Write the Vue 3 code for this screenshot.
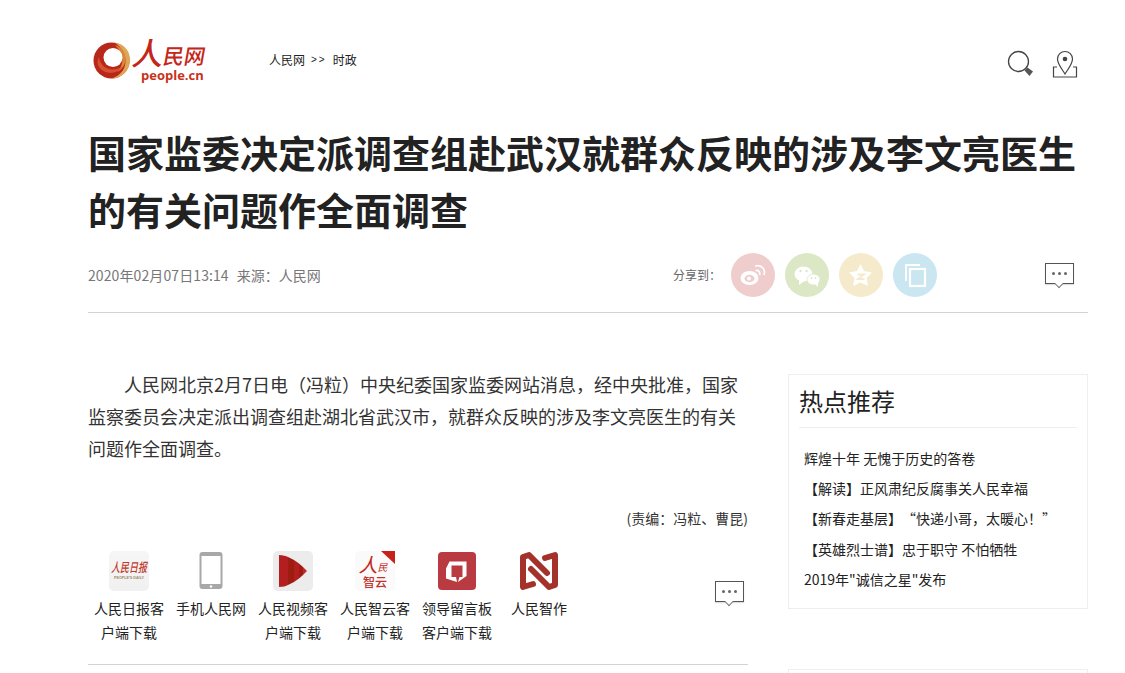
<template>
  <div class="page">
    <header class="top">
      <div class="logo">
        <svg class="logo-mark" viewBox="0 0 38 37" width="38" height="37">
          <circle cx="18.500" cy="18.500" r="18" fill="#b8281a" />
          <path d="M22 0.800 C32 2 37.500 10 37 19 C36.500 29 28 36.500 19 36.500 C28 33 32.500 27 32.500 19 C32.500 11 28 5 22 0.800Z" fill="#e0a655" />
          <path d="M22 3 C29 5 33 11 32.500 18 C32 24 28 28 24 30 C28 26 30 21 29 16 C28 10 25 6 22 3Z" fill="#d9853a" />
          <circle cx="20" cy="15.500" r="9.500" fill="#fff" />
          <path d="M6 15 C7 25 17 31 29 25 C24 33 9 33 5 23 C4 20 5 17 6 15Z" fill="#d8502e" />
        </svg>
        <div class="logo-words">
          <div class="logo-cn"><span class="cn-big">人</span><span>民网</span></div>
          <div class="logo-en">people.cn</div>
        </div>
      </div>
      <div class="crumb">
        <span>人民网</span>
        <span class="arrows">&gt;&gt;</span>
        <span>时政</span>
      </div>
      <div class="tools">
        <svg viewBox="0 0 28 28" width="28" height="28">
          <circle cx="11.500" cy="11.500" r="10" fill="none" stroke="#444" stroke-width="1.300" />
          <path d="M20.500 17.500 L26 21.500 L22.500 26 L17.500 20.500Z" fill="#555" />
        </svg>
        <svg viewBox="0 0 26 28" width="26" height="28">
          <path d="M13 24 C10 19 5.500 14 5.500 9 A7.500 7.500 0 0 1 20.500 9 C20.500 14 16 19 13 24Z" fill="none" stroke="#444" stroke-width="1.200" />
          <circle cx="13" cy="9" r="2.300" fill="#444" />
          <path d="M5 17 H1.500 V27 H24.500 V17 H21" fill="none" stroke="#444" stroke-width="1.200" />
        </svg>
      </div>
    </header>

    <h1 class="title">国家监委决定派调查组赴武汉就群众反映的涉及李文亮医生的有关问题作全面调查</h1>

    <div class="meta">
      <div class="meta-text"><span class="date">2020年02月07日13:14</span>来源：人民网</div>
      <div class="share">
        <span class="share-label">分享到：</span>
        <span v-for="s in shares" :key="s.name" class="share-btn" :style="{ background: s.color }">
          <svg v-if="s.name === 'weibo'" viewBox="0 0 44 44" width="44" height="44">
            <ellipse cx="18.500" cy="25" rx="9" ry="7" fill="#fff" />
            <ellipse cx="18.500" cy="25.500" rx="5" ry="3.700" fill="#f0cdcd" />
            <circle cx="18" cy="25.500" r="2" fill="#fff" />
            <path d="M24 13 C30 11.500 35 15.500 33 22 M24.500 17.500 C27.500 17 29.500 19 28.500 22" fill="none" stroke="#fff" stroke-width="1.700" />
          </svg>
          <svg v-else-if="s.name === 'wechat'" viewBox="0 0 44 44" width="44" height="44">
            <ellipse cx="18.500" cy="21" rx="9" ry="7.500" fill="#fff" />
            <path d="M14 26 L14 32 L20 27.500Z" fill="#fff" />
            <ellipse cx="28.500" cy="26.500" rx="6.500" ry="5.500" fill="#fff" stroke="#dce7c6" stroke-width="0.800" />
            <path d="M30 31 L33 34 L33 29Z" fill="#fff" />
            <circle cx="15.500" cy="18" r="1.200" fill="#dce7c6" />
            <circle cx="21.500" cy="18" r="1.200" fill="#dce7c6" />
            <circle cx="26.500" cy="25" r="0.900" fill="#dce7c6" />
            <circle cx="30.500" cy="25" r="0.900" fill="#dce7c6" />
          </svg>
          <svg v-else-if="s.name === 'qzone'" viewBox="0 0 44 44" width="44" height="44">
            <path d="M21.500 11 L25 18 L33 19.500 L27.500 25 L29 33 L21.500 29.500 L14 33 L15.500 25 L10 19.500 L18 18Z" fill="#fff" />
            <path d="M18.500 21.500 H25 L19 26 H25.500" fill="none" stroke="#f5eacb" stroke-width="1.800" />
          </svg>
          <svg v-else viewBox="0 0 44 44" width="44" height="44">
            <path d="M27 12 H13 V28" fill="none" stroke="#fff" stroke-width="1.800" />
            <rect x="17" y="16" width="15" height="17" fill="none" stroke="#fff" stroke-width="2.200" />
          </svg>
        </span>
      </div>
      <span class="comment comment-top">
        <i></i><i></i><i></i>
      </span>
    </div>

    <div class="columns">
      <main class="article">
        <p class="body-text">人民网北京2月7日电（冯粒）中央纪委国家监委网站消息，经中央批准，国家监察委员会决定派出调查组赴湖北省武汉市，就群众反映的涉及李文亮医生的有关问题作全面调查。</p>
        <div class="editor">(责编：冯粒、曹昆)</div>
        <div class="apps">
          <div v-for="a in apps" :key="a.name" class="app">
            <div class="app-icon">
              <div v-if="a.name === 'daily'" class="tile-daily">
                <span class="daily-cn">人民日报</span>
                <span class="daily-en">PEOPLE'S DAILY</span>
              </div>
              <svg v-else-if="a.name === 'phone'" viewBox="0 0 40 40" width="40" height="40">
                <rect x="8.500" y="1" width="23" height="37" rx="3" fill="#a8a8a8" />
                <rect x="10.500" y="5" width="19" height="28" fill="#fff" />
                <circle cx="20" cy="35.500" r="1.200" fill="#fff" />
              </svg>
              <svg v-else-if="a.name === 'video'" viewBox="0 0 40 40" width="40" height="40">
                <rect width="40" height="40" rx="5" fill="#ececec" />
                <path d="M6 4 C10 4 13 5 15 6 V34 C13 35 10 36 6 36Z" fill="#b31f20" />
                <path d="M15 6 L21 9 V31 L15 34Z" fill="#9e1c10" />
                <path d="M21 9 L26 12.500 V27.500 L21 31Z" fill="#b31f20" />
                <path d="M26 12.500 L30 16 V24 L26 27.500Z" fill="#9e1c10" />
                <path d="M30 16 L34 20 L30 24Z" fill="#c22a2a" />
              </svg>
              <div v-else-if="a.name === 'cloud'" class="tile-cloud">
                <span class="cloud-top"><b>人</b>民</span>
                <span class="cloud-bottom">智云</span>
              </div>
              <svg v-else-if="a.name === 'board'" viewBox="0 0 40 40" width="40" height="40">
                <rect x="1" y="1" width="38" height="38" rx="4" fill="#ba3a41" />
                <path d="M12.500 10.500 H29.500 V25 L21 31 L22.500 26 H25.500 V14.500 H14.500 V26 H19 L20 31 L9 27.500 V17.500Z" fill="#fff" />
              </svg>
              <svg v-else viewBox="0 0 40 40" width="40" height="40">
                <path d="M14 33 L4 36 V6 L10 4 L28 22" fill="none" stroke="#a5322a" stroke-width="6" stroke-linecap="round" stroke-linejoin="round" />
                <path d="M26 7 L36 4 V34 L30 36 L12 18" fill="none" stroke="#a5322a" stroke-width="6" stroke-linecap="round" stroke-linejoin="round" />
              </svg>
            </div>
            <div class="app-name">{{ a.label }}</div>
          </div>
          <span class="comment comment-bottom">
            <i></i><i></i><i></i>
          </span>
        </div>
      </main>

      <aside class="side">
        <section class="hot">
          <h2 class="hot-title">热点推荐</h2>
          <ul class="hot-list">
            <li v-for="item in hot" :key="item">{{ item }}</li>
          </ul>
        </section>
        <section class="next-box"></section>
      </aside>
    </div>
  </div>
</template>

<script setup>
const shares = [
  { name: 'weibo', color: '#f0cdcd' },
  { name: 'wechat', color: '#dce7c6' },
  { name: 'qzone', color: '#f5eacb' },
  { name: 'copy', color: '#c9e6f1' }
]

const apps = [
  { name: 'daily', label: '人民日报客户端下载' },
  { name: 'phone', label: '手机人民网' },
  { name: 'video', label: '人民视频客户端下载' },
  { name: 'cloud', label: '人民智云客户端下载' },
  { name: 'board', label: '领导留言板客户端下载' },
  { name: 'zuo', label: '人民智作' }
]

const hot = [
  '辉煌十年 无愧于历史的答卷',
  '【解读】正风肃纪反腐事关人民幸福',
  '【新春走基层】“快递小哥，太暖心！”',
  '【英雄烈士谱】忠于职守 不怕牺牲',
  '2019年"诚信之星"发布'
]
</script>

<style>
html, body {
  margin: 0;
  background: #fff;
  overflow: hidden;
}
</style>

<style scoped>
.page {
  width: 1000px;
  margin-left: 88px;
  color: #222;
  font-family: "Noto Sans CJK SC", "Liberation Sans", sans-serif;
  text-spacing-trim: space-all;
}

.top {
  display: flex;
  align-items: flex-start;
  height: 123px;
  box-sizing: border-box;
  padding-top: 38px;
}

.logo {
  display: flex;
  width: 176px;
  margin-left: 5px;
}

.logo-mark {
  margin-top: 4px;
}

.logo-words {
  margin-left: 2px;
  color: #c8321c;
}

.logo-cn {
  display: flex;
  align-items: flex-end;
  height: 30px;
  font-size: 21px;
  line-height: 26px;
  font-weight: 500;
  color: #c4261a;
  transform: skewX(-10deg);
}

.cn-big {
  font-size: 31px;
  line-height: 32px;
}

.logo-en {
  font-family: "Open Sans", "Liberation Sans", sans-serif;
  font-size: 13px;
  font-weight: 700;
  line-height: 14px;
  margin-left: 8px;
}

.crumb {
  display: flex;
  gap: 6px;
  font-size: 12px;
  line-height: 16px;
  margin-top: 14px;
  color: #222;
}

.arrows {
  font-family: "Liberation Sans", sans-serif;
  font-size: 10px;
  letter-spacing: 2px;
}

.tools {
  display: flex;
  gap: 17px;
  margin-left: auto;
  margin-right: 10px;
  margin-top: 12px;
}

.title {
  margin: 0;
  font-size: 38px;
  line-height: 57px;
  font-weight: 700;
  color: #222;
}

.meta {
  display: flex;
  align-items: center;
  height: 45px;
  margin-top: 15px;
  padding-bottom: 15px;
  border-bottom: 1px solid #d3d3d3;
}

.meta-text {
  font-size: 14px;
  line-height: 47px;
  height: 45px;
  color: #777;
}

.date {
  letter-spacing: 0.1px;
  margin-right: 8px;
}

.share {
  display: flex;
  align-items: center;
  margin-left: auto;
}

.share-label {
  font-size: 12px;
  color: #666;
  margin-right: 10px;
}

.share-btn {
  width: 44px;
  height: 44px;
  border-radius: 50%;
  margin-right: 10px;
  display: block;
}

.share-btn:last-child {
  margin-right: 0;
}

.comment {
  position: relative;
  flex: none;
  box-sizing: border-box;
  display: flex;
  align-items: center;
  justify-content: center;
  gap: 3px;
  width: 29px;
  height: 21px;
  border: 1px solid #555;
  background: #fff;
  box-shadow: 0 1px 1px #ddd;
}

.comment::after {
  content: "";
  position: absolute;
  left: 10px;
  bottom: -4px;
  width: 5px;
  height: 5px;
  background: #fff;
  border-right: 1px solid #777;
  border-bottom: 1px solid #777;
  transform: rotate(45deg);
}

.comment i {
  width: 3px;
  height: 3px;
  border-radius: 50%;
  background: #666;
}

.comment-top {
  margin: -3px 14px 0 108px;
}

.comment-bottom {
  margin: 30px 4px 0 auto;
}

.columns {
  display: flex;
  justify-content: space-between;
  margin-top: 55px;
}

.article {
  width: 660px;
}

.body-text {
  margin: 0;
  font-size: 18px;
  line-height: 32px;
  text-indent: 36px;
  color: #333;
}

.editor {
  margin-top: 45px;
  font-size: 14px;
  line-height: 18px;
  text-align: right;
  color: #333;
}

.apps {
  display: flex;
  align-items: flex-start;
  margin-top: 24px;
  padding-bottom: 20px;
  border-bottom: 1px solid #d3d3d3;
}

.app {
  width: 82px;
  text-align: center;
}

.app-icon {
  height: 40px;
  display: flex;
  justify-content: center;
}

.app-name {
  width: 72px;
  margin: 5px auto 0;
  font-size: 14px;
  line-height: 24px;
  color: #222;
}

.tile-daily {
  width: 40px;
  height: 40px;
  border-radius: 5px;
  background: linear-gradient(#f6f6f6, #f0f0f0);
  display: flex;
  flex-direction: column;
  align-items: center;
  justify-content: center;
}

.daily-cn {
  font-size: 9px;
  line-height: 14px;
  font-weight: 500;
  font-style: italic;
  color: #c0392b;
  transform: scaleY(1.4);
}

.daily-en {
  font-family: "Liberation Sans", sans-serif;
  font-size: 3.700px;
  line-height: 6px;
  font-weight: 700;
  color: #9a8a6a;
}

.tile-cloud {
  position: relative;
  width: 40px;
  height: 40px;
  box-sizing: border-box;
  padding-top: 3px;
  border-radius: 5px;
  background: #fafafa;
  display: flex;
  flex-direction: column;
  align-items: center;
}

.tile-cloud::after {
  content: "";
  position: absolute;
  right: 0;
  top: 0;
  border-top: 13px solid #c8211a;
  border-left: 14px solid transparent;
}

.cloud-top {
  display: flex;
  align-items: flex-end;
  height: 20px;
  font-size: 10px;
  line-height: 14px;
  font-style: italic;
  color: #c4261a;
  margin-right: 4px;
}

.cloud-top b {
  font-size: 19px;
  line-height: 20px;
  font-weight: 400;
}

.cloud-bottom {
  margin-top: 1px;
  font-size: 12px;
  line-height: 14px;
  font-weight: 500;
  color: #c4322a;
}

.side {
  width: 300px;
  padding-top: 6px;
}

.hot {
  box-sizing: border-box;
  height: 235px;
  padding: 0 10px;
  border: 1px solid #eee;
}

.hot-title {
  margin: 0;
  padding: 8px 0 8px;
  font-size: 24px;
  line-height: 36px;
  font-weight: 400;
  color: #222;
  border-bottom: 1px solid #eee;
}

.hot-list {
  list-style: none;
  margin: 15px 0 0;
  padding: 0 0 0 5px;
}

.hot-list li {
  font-size: 14px;
  line-height: 30.200px;
  color: #222;
  white-space: nowrap;
}

.next-box {
  height: 60px;
  margin-top: 60px;
  border: 1px solid #eee;
}
</style>
